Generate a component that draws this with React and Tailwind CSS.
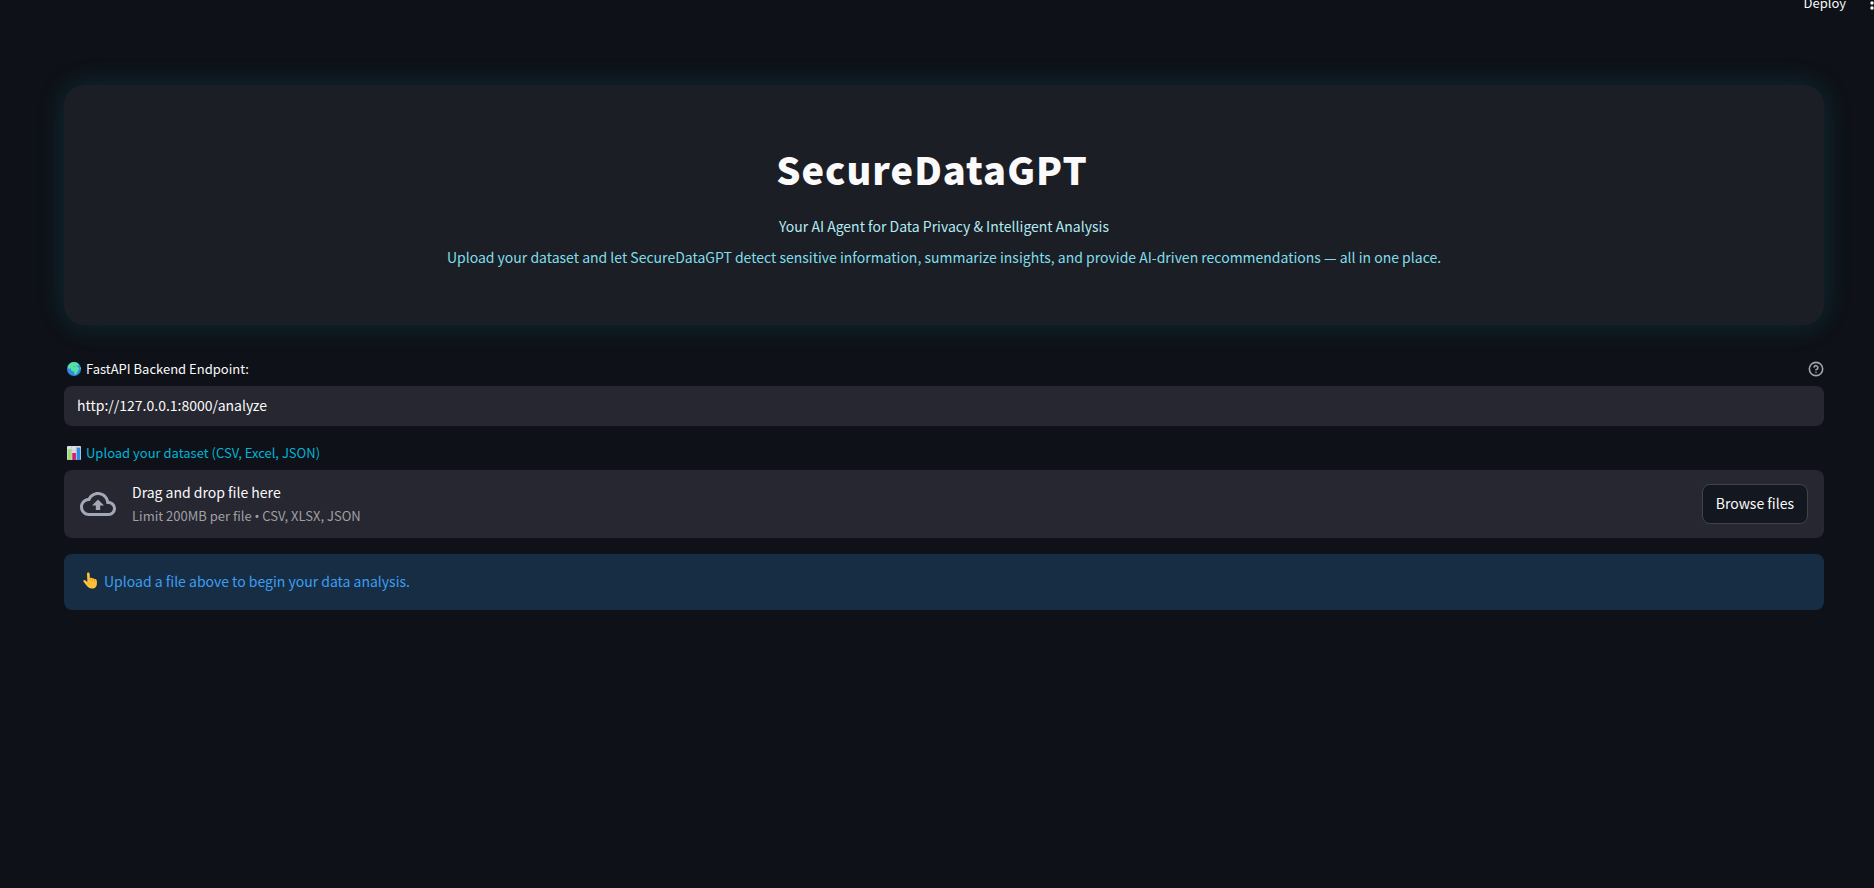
import React from "react";
import { CircleHelp } from "lucide-react";

function GlobeIcon() {
  return (
    <svg viewBox="0 0 16 16" className="size-4 shrink-0" aria-hidden="true">
      <circle cx="8" cy="8" r="7" fill="#2f8be6" />
      <path d="M1.600 6.200C2.400 3 5 1 8 1c1.200 0 2.200.3 3.100.7l2 1.800-.6 1.400-1.300-.3-.6 1 1.700.5 1 1.700-1.600 2.600-.6 1.700-1.500 1.700-1.200-.7-.4-2.600-2.300-.6-1-1.600.4-1.200L4 7.600 2.800 8z" fill="#55e0a0" />
      <path d="M7.200 5.200l2.400.3-.6.6-1.600-.2z" fill="#3aa6d8" />
      <path d="M13.900 5.400l.9 1.600.1 1.800-1-1.200z" fill="#55e0a0" />
    </svg>
  );
}

function ChartIcon() {
  return (
    <svg viewBox="0 0 16 16" className="size-4 shrink-0" aria-hidden="true">
      <rect x="1" y="1" width="14" height="14" rx="1" fill="#e4dbe8" />
      <path d="M1 5.500h14M1 10h14M5.600 1v14M10.400 1v14" stroke="#c3b8cb" strokeWidth=".5" />
      <rect x="1.800" y="4.200" width="3.600" height="10.800" fill="#9be06a" />
      <rect x="6.300" y="8" width="3.600" height="7" fill="#d11f6f" />
      <rect x="10.700" y="2.600" width="3.600" height="12.400" fill="#2f8de4" />
    </svg>
  );
}

function PointUpIcon() {
  return (
    <svg viewBox="0 0 18 18" className="size-[18px] shrink-0" aria-hidden="true">
      <path
        d="M5 1.600c0-1.500 2.500-1.500 2.600 0l.3 4.500c1-.7 2-.4 2.400.4.9-.5 1.900-.1 2.200.7 1-.3 2.200.3 2.300 1.500.2 2.600.3 4.600-1 6.200-1.400 1.900-5.100 2.200-7.200.7C4.600 14 3.200 11.800 1.600 9.800c-.8-1.100.4-2.200 1.600-1.500L5.400 10z"
        fill="#ffc13b"
      />
      <path d="M8 6.400l.2 2.400M10.300 6.800l.1 2.200M12.500 7.500v2" stroke="#e5912a" strokeWidth=".7" fill="none" strokeLinecap="round" />
      <path d="M5.400 10c1.200.6 1.800 1.600 1.700 2.800" stroke="#f09a35" strokeWidth=".7" fill="none" />
    </svg>
  );
}

function CloudUploadIcon() {
  return (
    <svg viewBox="0 0 24 24" className="size-9 shrink-0 fill-[#a3a8b8]" aria-hidden="true">
      <path d="M19.350 10.040C18.670 6.590 15.640 4 12 4 9.110 4 6.600 5.640 5.350 8.040 2.340 8.360 0 10.910 0 14c0 3.310 2.690 6 6 6h13c2.760 0 5-2.240 5-5 0-2.640-2.050-4.780-4.650-4.960zM19 18H6c-2.210 0-4-1.790-4-4 0-2.050 1.530-3.760 3.560-3.970l1.070-.11.5-.95C8.080 7.140 9.940 6 12 6c2.620 0 4.880 1.860 5.390 4.430l.3 1.500 1.530.11c1.560.1 2.780 1.410 2.780 2.960 0 1.650-1.350 3-3 3zM8 13h2.550v3h2.900v-3H16l-4-4z" />
    </svg>
  );
}

function Header() {
  return (
    <header className="flex h-1.5 items-center justify-end gap-4">
      <button type="button" className="text-[13px] leading-5">Deploy</button>
      <button type="button" aria-label="Main menu" className="-mr-2 shrink-0">
        <svg viewBox="0 0 20 20" className="size-5 fill-current" aria-hidden="true">
          <circle cx="10" cy="5" r="1.700" />
          <circle cx="10" cy="10" r="1.700" />
          <circle cx="10" cy="15" r="1.700" />
        </svg>
      </button>
    </header>
  );
}

export default function App() {
  return (
    <div className="min-h-screen overflow-hidden bg-[#0e1117] font-['Noto_Sans_CJK_SC','Source_Sans_Pro',sans-serif] text-sm text-[#fafafa]">
      <Header />
      <main className="px-4 pt-[79px] sm:pl-16 sm:pr-[50px]">
        <section className="rounded-[20px] bg-[#1c1e26] px-10 pt-[54px] pb-[55px] text-center shadow-[0_0_30px_rgba(0,229,255,0.13)]">
          <h1 className="pr-6 text-[38px] leading-[60px] font-black tracking-[1px]">SecureDataGPT</h1>
          <p className="mt-[14px] leading-[26px] text-[#b2ebf2]">Your AI Agent for Data Privacy &amp; Intelligent Analysis</p>
          <p className="mt-[5px] leading-[26px] text-[#80deea]">
            Upload your dataset and let SecureDataGPT detect sensitive information, summarize insights, and provide AI-driven recommendations — all in one place.
          </p>
        </section>

        <div className="mt-8 flex h-6 items-center justify-between">
          <label htmlFor="endpoint" className="flex items-center gap-1 pl-0.5 text-[13px] leading-6">
            <GlobeIcon />
            FastAPI Backend Endpoint:
          </label>
          <button type="button" aria-label="Help" className="text-[#a3a4a8]">
            <CircleHelp className="size-4" strokeWidth={2.4} />
          </button>
        </div>
        <input
          id="endpoint"
          type="text"
          defaultValue="http://127.0.0.1:8000/analyze"
          className="mt-[5px] block h-10 w-full rounded-lg bg-[#262730] px-[13px] pb-0.5 outline-none"
        />

        <div className="mt-[15px] flex h-6 items-center gap-1 pl-0.5 text-[13px] leading-6 text-[#00b4d8]">
          <ChartIcon />
          <span id="dataset-label">Upload your dataset (CSV, Excel, JSON)</span>
        </div>
        <section aria-labelledby="dataset-label" className="mt-[5px] flex h-[68px] items-center gap-4 rounded-lg bg-[#262730] px-4">
          <CloudUploadIcon />
          <div className="min-w-0 flex-1">
            <div className="leading-6">Drag and drop file here</div>
            <div className="text-[13px] leading-6 text-[#a0a0a6]">
              Limit 200MB per file <span className="font-['Noto_Sans',sans-serif]">•</span> CSV, XLSX, JSON
            </div>
          </div>
          <button type="button" className="h-10 rounded-lg border border-[#41434b] bg-[#131720] px-[13px] pb-0.5">Browse files</button>
        </section>

        <div role="alert" className="mt-4 flex h-14 items-center gap-1 rounded-lg bg-[#172d43] px-[18px] pb-0.5 text-[#3d9df3]">
          <PointUpIcon />
          <span>Upload a file above to begin your data analysis.</span>
        </div>
      </main>
    </div>
  );
}
